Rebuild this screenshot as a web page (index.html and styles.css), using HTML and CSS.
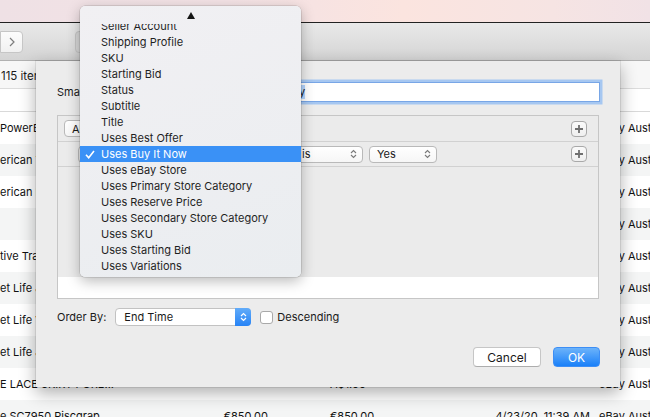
FILE: index.html
```html
<!DOCTYPE html>
<html lang="en">
<head>
    <meta charset="UTF-8">
    <title>Smart Group</title>
    <link rel="stylesheet" href="styles.css">
</head>
<body>
    <div class="desktop"></div>
    <div class="window">
        <div class="toolbar">
            <div class="nav">
                <span class="nav-btn back"></span>
                <span class="nav-btn fwd">
                    <svg width="6" height="10" viewBox="0 0 6 10"><path d="M1 1l4 4-4 4" fill="none" stroke="#7d7d7d" stroke-width="1.2"/></svg>
                </span>
            </div>
            <div class="tool-btn"></div>
        </div>
        <div class="statusbar">115 items</div>
        <div class="colheader"></div>
        <div class="table">
            <div class="row"><span class="c-name">PowerBeats Pro Wireless</span><span class="c-price">A$199.00</span><span class="c-cost">A$199.00</span><span class="c-date">4/20/20, 9:12 AM</span><span class="c-acct">eBay Australia</span></div>
            <div class="row"><span class="c-name">erican Trucker Hat</span><span class="c-price">A$24.00</span><span class="c-cost">A$24.00</span><span class="c-date">4/21/20, 8:05 PM</span><span class="c-acct">eBay Australia</span></div>
            <div class="row"><span class="c-name">erican Flag Tee</span><span class="c-price">A$19.00</span><span class="c-cost">A$19.00</span><span class="c-date">4/21/20, 8:10 PM</span><span class="c-acct">eBay Australia</span></div>
            <div class="row"><span class="c-name"></span><span class="c-price"></span><span class="c-cost"></span><span class="c-date"></span><span class="c-acct">eBay Australia</span></div>
            <div class="row"><span class="c-name">tive Trading Card</span><span class="c-price">A$5.00</span><span class="c-cost">A$5.00</span><span class="c-date">4/22/20, 1:44 PM</span><span class="c-acct">eBay Australia</span></div>
            <div class="row"><span class="c-name">et Life Jacket</span><span class="c-price">A$49.00</span><span class="c-cost">A$49.00</span><span class="c-date">4/22/20, 3:02 PM</span><span class="c-acct">eBay Australia</span></div>
            <div class="row"><span class="c-name">et Life Vest</span><span class="c-price">A$45.00</span><span class="c-cost">A$45.00</span><span class="c-date">4/22/20, 3:05 PM</span><span class="c-acct">eBay Australia</span></div>
            <div class="row"><span class="c-name">et Life Jacket XL</span><span class="c-price">A$52.00</span><span class="c-cost">A$52.00</span><span class="c-date">4/22/20, 3:07 PM</span><span class="c-acct">eBay Australia</span></div>
            <div class="row"><span class="c-name">E LACE SKIRT PURE...</span><span class="c-price"></span><span class="c-cost">A$1.00</span><span class="c-date"></span><span class="c-acct">eBay Australia</span></div>
            <div class="row"><span class="c-name">e SC7950 Piscgrap...</span><span class="c-price">€850.00</span><span class="c-cost">€850.00</span><span class="c-date">4/23/20, 11:39 AM</span><span class="c-acct">eBay Australia</span></div>
        </div>
    </div>

    <div class="sheet">
        <div class="name-row">
            <span class="name-label">Smart Group Name:</span>
            <div class="name-field"><span class="selected">Fixed Price Buy Now Only</span></div>
        </div>

        <div class="pred">
            <div class="pred-row top">
                <div class="pop pop-all">All
                    <svg width="7" height="10" viewBox="0 0 7 10"><path d="M1 4l2.5-2.5L6 4M1 6l2.5 2.5L6 6" fill="none" stroke="#7a7a7a" stroke-width="1.1"/></svg>
                </div>
                <div class="plus"><svg width="10" height="10" viewBox="0 0 10 10"><path d="M5 1v8M1 5h8" stroke="#6f6f6f" stroke-width="1.8"/></svg></div>
            </div>
            <div class="pred-row crit">
                <div class="pop pop-field">Uses Buy It Now
                    <svg width="7" height="10" viewBox="0 0 7 10"><path d="M1 4l2.5-2.5L6 4M1 6l2.5 2.5L6 6" fill="none" stroke="#7a7a7a" stroke-width="1.1"/></svg>
                </div>
                <div class="pop pop-op">is
                    <svg width="7" height="10" viewBox="0 0 7 10"><path d="M1 4l2.5-2.5L6 4M1 6l2.5 2.5L6 6" fill="none" stroke="#7a7a7a" stroke-width="1.1"/></svg>
                </div>
                <div class="pop pop-val">Yes
                    <svg width="7" height="10" viewBox="0 0 7 10"><path d="M1 4l2.5-2.5L6 4M1 6l2.5 2.5L6 6" fill="none" stroke="#7a7a7a" stroke-width="1.1"/></svg>
                </div>
                <div class="plus"><svg width="10" height="10" viewBox="0 0 10 10"><path d="M5 1v8M1 5h8" stroke="#6f6f6f" stroke-width="1.8"/></svg></div>
            </div>
            <div class="pred-fill"></div>
        </div>

        <div class="order-row">
            <span>Order By:</span>
            <div class="order-pop">
                <span>End Time</span>
                <span class="order-arrow">
                    <svg width="7" height="10" viewBox="0 0 7 10"><path d="M1 4l2.5-2.5L6 4M1 6l2.5 2.5L6 6" fill="none" stroke="#fff" stroke-width="1.2"/></svg>
                </span>
            </div>
            <span class="checkbox"></span>
            <span class="check-label">Descending</span>
        </div>

        <div class="buttons">
            <button class="btn">Cancel</button>
            <button class="btn btn-ok">OK</button>
        </div>
    </div>

    <div class="menu">
        <div class="menu-up"><span class="up-arrow"></span></div>
        <div class="menu-items">
            <div class="menu-list">
                <div class="menu-item">Seller Account</div>
                <div class="menu-item">Shipping Profile</div>
                <div class="menu-item">SKU</div>
                <div class="menu-item">Starting Bid</div>
                <div class="menu-item">Status</div>
                <div class="menu-item">Subtitle</div>
                <div class="menu-item">Title</div>
                <div class="menu-item">Uses Best Offer</div>
                <div class="menu-item sel">
                    <svg class="check" width="10" height="9" viewBox="0 0 10 9"><path d="M1 4.8l2.7 3L9 1" fill="none" stroke="#fff" stroke-width="1.6"/></svg>
                    Uses Buy It Now
                </div>
                <div class="menu-item">Uses eBay Store</div>
                <div class="menu-item">Uses Primary Store Category</div>
                <div class="menu-item">Uses Reserve Price</div>
                <div class="menu-item">Uses Secondary Store Category</div>
                <div class="menu-item">Uses SKU</div>
                <div class="menu-item">Uses Starting Bid</div>
                <div class="menu-item">Uses Variations</div>
            </div>
        </div>
    </div>
</body>
</html>
```

FILE: styles.css
```css
* {
    box-sizing: border-box;
}
body {
    margin: 0;
    width: 650px;
    height: 417px;
    overflow: hidden;
    position: relative;
    background: #fff;
    font-family: "Inter", "Roboto", sans-serif;
    font-size: 11px;
    color: #1a1a1a;
}

/* window behind the sheet */
.desktop {
    height: 22px;
    background: linear-gradient(90deg, #efe1e5 0%, #f3e2e5 35%, #fbe4df 62%, #f6e4e3 85%, #f1e2e6 100%);
}
.window {
    border-top: 1px solid #222;
}
.toolbar {
    height: 38px;
    display: flex;
    align-items: flex-start;
    padding-top: 8px;
    background: linear-gradient(#e9e9e9, #d4d4d4);
    border-bottom: 1px solid #b1b1b1;
}
.nav {
    display: flex;
    margin-left: -23px;
}
.nav-btn {
    width: 23px;
    height: 22px;
    display: flex;
    align-items: center;
    justify-content: center;
    background: linear-gradient(#fcfcfc, #f1f1f1);
    border: 1px solid #c6c6c6;
}
.nav-btn.back {
    border-radius: 4px 0 0 4px;
    border-right: none;
}
.nav-btn.fwd {
    border-radius: 0 4px 4px 0;
}
.tool-btn {
    margin-left: 52px;
    width: 70px;
    height: 22px;
    border-radius: 4px;
    background: #d6d6d6;
    border: 1px solid #c4c4c4;
}
.statusbar {
    height: 28px;
    line-height: 30px;
    padding-left: 1px;
    background: #f7f7f7;
    border-bottom: 1px solid #dcdcdc;
    font-size: 11.5px;
}
.colheader {
    height: 23px;
    background: #fff;
    border-bottom: 1px solid #d9d9d9;
}
.row {
    display: flex;
    height: 32px;
    line-height: 33px;
    white-space: nowrap;
    color: #111;
}
.row > span {
    flex-shrink: 0;
}
.row:nth-child(even) {
    background: #f4f5f5;
}
.c-name {
    width: 180px;
    overflow: hidden;
}
.c-price {
    width: 88px;
    text-align: right;
}
.c-cost {
    width: 100px;
    margin-left: 62px;
}
.c-date {
    width: 160px;
    text-align: right;
}
.c-acct {
    padding-left: 9px;
}

/* sheet */
.sheet {
    position: absolute;
    left: 36px;
    top: 61px;
    width: 584px;
    height: 326px;
    padding: 21px 20px 20px 21px;
    background: #ececec;
    box-shadow: 0 0 0 1px rgba(0, 0, 0, 0.08), 0 6px 16px rgba(0, 0, 0, 0.32);
    display: flex;
    flex-direction: column;
}
.name-row {
    display: flex;
    align-items: center;
    height: 20px;
    gap: 6px;
}
.name-field {
    flex: 1;
    height: 20px;
    padding-left: 4px;
    line-height: 18px;
    background: #fff;
    border: 1px solid #78a6e6;
    box-shadow: 0 0 0 2.5px #a6c7f1;
    white-space: nowrap;
    overflow: hidden;
}
.selected {
    background: #b4d5fe;
}
.pred {
    margin-top: 13px;
    margin-right: 1px;
    height: 184px;
    border: 1px solid #c6c6c6;
    background: #fff;
    display: flex;
    flex-direction: column;
}
.pred-row {
    display: flex;
    align-items: center;
    gap: 6px;
    background: #ebebeb;
    border-bottom: 1px solid #d1d1d1;
    padding: 0 11px 0 6px;
}
.pred-row.top {
    height: 26px;
}
.pred-row.crit {
    height: 25px;
    padding-left: 20px;
}
.pred-fill {
    height: 110px;
    background: #ebebeb;
}
.pop {
    height: 17px;
    display: flex;
    align-items: center;
    justify-content: space-between;
    padding: 0 5px 0 7px;
    border: 1px solid #b9b9b9;
    border-radius: 4px;
    background: linear-gradient(#fff, #f6f6f6);
    white-space: nowrap;
}
.pop-all {
    width: 60px;
}
.pop-field {
    width: 210px;
}
.pop-op {
    width: 69px;
}
.pop-val {
    width: 68px;
}
.plus {
    width: 16px;
    height: 16px;
    margin-left: auto;
    display: flex;
    align-items: center;
    justify-content: center;
    border: 1px solid #a9a9a9;
    border-radius: 4px;
    background: linear-gradient(#fafafa, #efefef);
}
.order-row {
    margin-top: 9px;
    height: 18px;
    display: flex;
    align-items: center;
}
.order-pop {
    margin-left: 9px;
    width: 136px;
    height: 18px;
    display: flex;
    align-items: center;
    justify-content: space-between;
    padding-left: 8px;
    background: #fff;
    border: 1px solid #c2c2c2;
    border-radius: 4px;
}
.order-arrow {
    width: 16px;
    height: 18px;
    margin: -1px -1px -1px 0;
    display: flex;
    align-items: center;
    justify-content: center;
    background: linear-gradient(#62acf9, #2683f6);
    border-radius: 0 4px 4px 0;
}
.checkbox {
    margin-left: 9px;
    width: 13px;
    height: 13px;
    background: #fff;
    border: 1px solid #a9a9a9;
    border-radius: 3px;
}
.check-label {
    margin-left: 4px;
}
.buttons {
    margin-top: 21px;
    display: flex;
    justify-content: flex-end;
    gap: 12px;
}
.btn {
    width: 68px;
    height: 20px;
    padding: 0;
    font-family: inherit;
    font-size: 12px;
    color: #1a1a1a;
    background: #fff;
    border: 1px solid #c6c6c6;
    border-bottom-color: #adadad;
    border-radius: 4px;
}
.btn-ok {
    width: 47px;
    color: #fff;
    background: linear-gradient(#6cb3fa, #1a80f9);
    border-color: #3d8ef5;
}

/* popup menu */
.menu {
    position: absolute;
    left: 80px;
    top: 6px;
    width: 221px;
    height: 271px;
    border-radius: 5px;
    overflow: hidden;
    background: linear-gradient(160deg, #f1f0f3, #eaedf0);
    box-shadow: 0 0 0 0.5px rgba(0, 0, 0, 0.18), 0 4px 14px rgba(0, 0, 0, 0.28);
}
.menu-up {
    height: 18px;
    padding-top: 6px;
    display: flex;
    justify-content: center;
}
.up-arrow {
    width: 0;
    height: 0;
    border-left: 4.5px solid transparent;
    border-right: 4.5px solid transparent;
    border-bottom: 7px solid #151515;
}
.menu-items {
    height: 253px;
    overflow: hidden;
}
.menu-list {
    margin-top: -6px;
}
.menu-item {
    position: relative;
    height: 16px;
    line-height: 16px;
    padding-left: 21px;
    white-space: nowrap;
    color: #1f1f1f;
}
.menu-item.sel {
    background: #3a91f6;
    color: #fff;
}
.check {
    position: absolute;
    left: 5px;
    top: 4px;
}
```
